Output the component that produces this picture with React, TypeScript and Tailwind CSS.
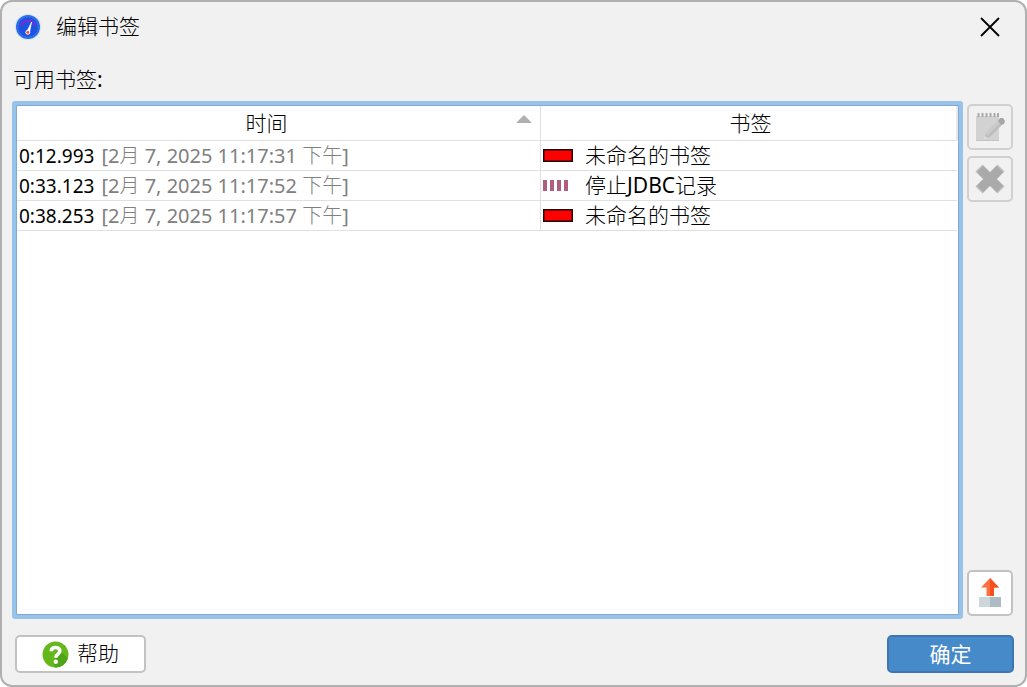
import { useState } from 'react';

type Bookmark = {
  id: number;
  time: string;
  date: string;
  name: string;
  marker: 'solid' | 'dashed';
};

const bookmarks: Bookmark[] = [
  { id: 1, time: '0:12.993', date: '[2月 7, 2025 11:17:31 下午]', name: '未命名的书签', marker: 'solid' },
  { id: 2, time: '0:33.123', date: '[2月 7, 2025 11:17:52 下午]', name: '停止JDBC记录', marker: 'dashed' },
  { id: 3, time: '0:38.253', date: '[2月 7, 2025 11:17:57 下午]', name: '未命名的书签', marker: 'solid' },
];

const AppIcon = () => (
  <svg className="h-[26px] w-[26px]" viewBox="0 0 26 26" aria-hidden="true">
    <circle cx="13" cy="13" r="13" fill="#cfe4f4" />
    <circle cx="13" cy="13" r="12" fill="#2c6ae8" />
    <circle cx="13" cy="13" r="10" fill="#1f52e0" stroke="#3f86f2" strokeWidth="1" strokeDasharray="1 2" />
    <path d="M5.500 12a8 7 0 0 1 15-1" fill="none" stroke="#7a2fcc" strokeWidth="2" />
    <path d="M11.600 18 16.600 8l-2.200 11z" fill="#fff" stroke="#fff" strokeWidth=".6" />
    <circle cx="12.800" cy="18.300" r="2.400" fill="#fff" />
    <circle cx="12.800" cy="18.300" r="1.500" fill="#f0503c" />
  </svg>
);

const EditIcon = () => (
  <svg className="h-[30px] w-[30px]" viewBox="0 0 30 30" aria-hidden="true">
    <path d="M1 4h23v25H1z" fill="#d2d2d2" />
    <path d="M1 28.5h23" stroke="#c2c2c2" />
    <path d="M3.5 1v4M7.5 1v4M11.5 1v4M15.5 1v4M19.5 1v4M23 1v4" stroke="#a9a9a9" strokeWidth="2" />
    <path d="m9 27 2-6L23 9l4 4-12 12z" fill="#bebebe" />
    <path d="m11 21 12-12 2 2-13 13z" fill="#cacaca" />
    <path d="m9 27 1-3 2 2z" fill="#e6e6e6" />
    <path d="m23 9 2-3h3l2 3-1 3-3 1z" fill="#a7a7a7" />
  </svg>
);

const DeleteIcon = () => (
  <svg className="h-[30px] w-[30px]" viewBox="0 0 30 30" aria-hidden="true">
    <path d="m4 4 22 22M26 4 4 26" fill="none" stroke="#c0c0c0" strokeWidth="10" />
    <path d="m5 5 20 20M25 5 5 25" fill="none" stroke="#aaa" strokeWidth="9" />
  </svg>
);

const ExportIcon = () => (
  <svg className="h-[30px] w-[22px]" viewBox="0 0 22 30" aria-hidden="true">
    <path d="M11 0 20 9.5h-5V18H7.500V9.500H2z" fill="#fd7040" />
    <path d="M11 0 20 9.500h-5V18h-4z" fill="#f4501e" />
    <path d="M0 19h11v10H0z" fill="#cdd6dc" />
    <path d="M11 19h11v10H11z" fill="#adbcc2" />
  </svg>
);

const HelpIcon = () => (
  <svg className="h-[27px] w-[27px]" viewBox="0 0 27 27" aria-hidden="true">
    <circle cx="13.5" cy="13.5" r="13" fill="#65b81c" />
    <path d="M17 8.500 25.800 17.500A13 13 0 0 1 13 26.500L11.500 21z" fill="#4fa316" />
    <path
      d="M9.300 10.200C9.300 7.500 11.200 6.500 13.500 6.500s4.400 1.300 4.400 3.600c0 3.200-4.100 3-4.100 6.600"
      fill="none"
      stroke="#fff"
      strokeWidth="3.600"
    />
    <circle cx="13.800" cy="20.800" r="2.200" fill="#fff" />
  </svg>
);

const MarkerIcon = ({ marker }: { marker: Bookmark['marker'] }) =>
  marker === 'solid' ? (
    <svg className="h-[13px] w-[30px]" viewBox="0 0 30 13" aria-hidden="true">
      <path d="M.75.75h28.500v11.500H.75z" fill="#f00" stroke="#1c0b0b" strokeWidth="1.500" />
    </svg>
  ) : (
    <svg className="h-[13px] w-[30px]" viewBox="0 0 30 13" aria-hidden="true">
      <path d="M2 1v11M9 1v11M16 1v11M23 1v11" stroke="#af5f7e" strokeWidth="4" />
    </svg>
  );

const sideButton = 'flex h-[46px] w-[46px] items-center justify-center rounded-[5px] border-2';

export default function App() {
  const [selected, setSelected] = useState<number | null>(null);
  const disabled = selected === null;

  return (
    <div className="flex min-h-screen flex-col rounded-xl border-2 border-[#b0b0b0] bg-[#f1f1f1] font-['Noto_Sans','Noto_Sans_CJK_SC_Light','Noto_Sans_CJK_SC',sans-serif] text-[21px] font-normal text-black">
      <header className="flex h-[50px] items-center gap-[15px] pr-[23px] pl-[13px]">
        <AppIcon />
        <h1 className="flex-1 font-normal">编辑书签</h1>
        <button type="button" aria-label="关闭" className="flex h-6 w-6 items-center justify-center">
          <svg className="h-5 w-5" viewBox="0 0 20 20" aria-hidden="true">
            <path d="m1 1 18 18M19 1 1 19" fill="none" stroke="#000" strokeWidth="1.800" />
          </svg>
        </button>
      </header>

      <h2 id="bookmarks-label" className="flex h-[49px] items-center px-[11px] pt-1.5 text-[21px] font-normal">
        可用书签:
      </h2>

      <main className="flex flex-1 gap-1 pr-3 pl-[10px]">
        <div className="flex flex-1 rounded-[3px] border-4 border-[#97c2e9] bg-white">
          <div className="flex-1 border border-[#82aad6]">
            <table aria-labelledby="bookmarks-label" className="w-full table-fixed border-collapse leading-7">
              <colgroup>
                <col className="w-[55.7%]" />
                <col />
              </colgroup>
              <thead>
                <tr className="h-[34px] border-b border-[#e0e0e0]">
                  <th aria-sort="ascending" className="border-r border-[#e0e0e0] p-0 font-normal">
                    <div className="grid grid-cols-[1fr_24px] items-center">
                      <span>时间</span>
                      <svg className="mb-2 h-2 w-4" viewBox="0 0 16 8" aria-hidden="true">
                        <path d="m8 0 8 8H0z" fill="#b0b0b0" />
                      </svg>
                    </div>
                  </th>
                  <th className="border-r-2 border-[#e8e8e8] p-0 pl-1 font-normal">书签</th>
                </tr>
              </thead>
              <tbody>
                {bookmarks.map((item) => (
                  <tr
                    key={item.id}
                    onClick={() => setSelected(item.id)}
                    className={selected === item.id ? 'h-[30px] border-b border-[#e0e0e0] bg-[#dcebf8]' : 'h-[30px] border-b border-[#e0e0e0]'}
                  >
                    <td className="border-r border-[#e0e0e0] p-0 pt-px pl-0.5">
                      <div className="flex items-baseline gap-[7px] whitespace-nowrap">
                        <span className="text-[19px]">{item.time}</span>
                        <span className="text-xl leading-7 text-[#808080]">{item.date}</span>
                      </div>
                    </td>
                    <td className="p-0 pl-0.5">
                      <div className="flex items-center gap-3">
                        <MarkerIcon marker={item.marker} />
                        <span>{item.name}</span>
                      </div>
                    </td>
                  </tr>
                ))}
              </tbody>
            </table>
          </div>
        </div>

        <div className="flex flex-col justify-between py-[3px]">
          <div className="flex flex-col gap-1.5">
            <button type="button" disabled={disabled} aria-label="编辑" className={`${sideButton} border-[#d0d0d0]`}>
              <EditIcon />
            </button>
            <button type="button" disabled={disabled} aria-label="删除" className={`${sideButton} border-[#d0d0d0]`}>
              <DeleteIcon />
            </button>
          </div>
          <button type="button" aria-label="导出" className={`${sideButton} border-[#c2c2c2] bg-white`}>
            <ExportIcon />
          </button>
        </div>
      </main>

      <footer className="flex items-center justify-between pt-4 pr-[11px] pb-3 pl-[13px]">
        <button
          type="button"
          className="flex h-[38px] w-[131px] items-center justify-center gap-2 rounded-[5px] border-2 border-[#c2c2c2] bg-white"
        >
          <HelpIcon />
          <span>帮助</span>
        </button>
        <button
          type="button"
          className="h-[38px] w-[127px] rounded-[5px] border-2 border-[#3d76b2] bg-[#468aca] font-['Noto_Sans_CJK_SC',sans-serif] text-white"
        >
          确定
        </button>
      </footer>
    </div>
  );
}
